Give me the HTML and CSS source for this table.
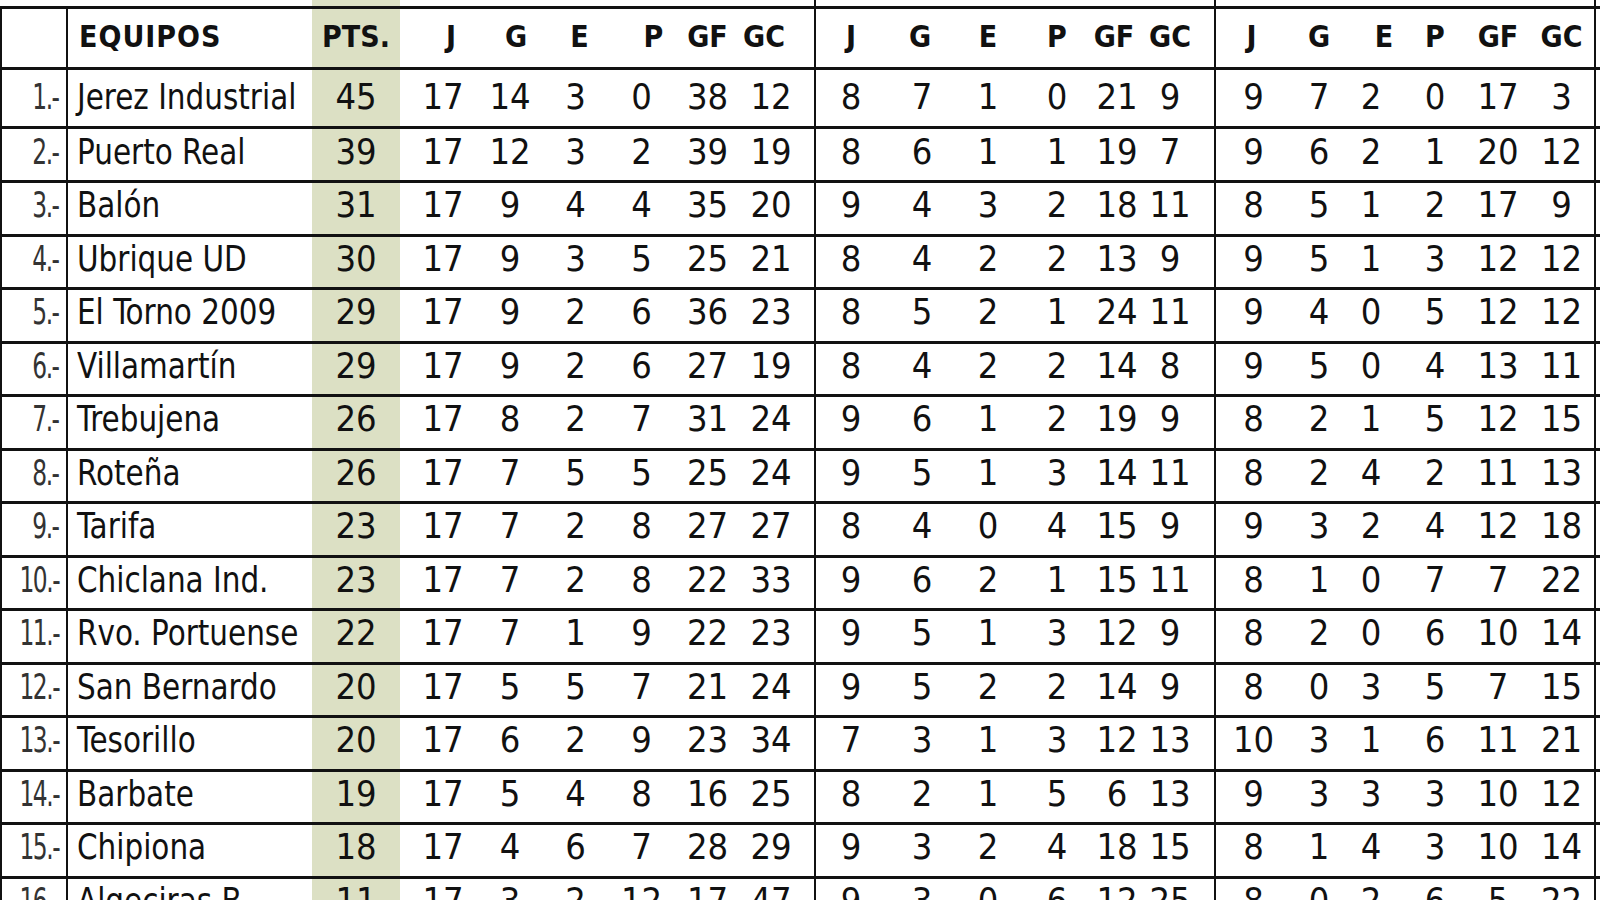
FILE: index.html
```html
<!DOCTYPE html>
<html lang="es">
<head>
<meta charset="utf-8">
<title>Clasificación</title>
<link rel="stylesheet" href="styles.css">
</head>
<body>
<div class="sheet">
  <div class="row top"><div></div><div></div><div></div><div></div><div></div><div></div><div></div><div></div><div></div><div></div><div></div><div></div><div></div><div></div><div></div><div></div><div></div><div></div><div></div><div></div><div></div></div>
  <div class="row head"><div></div><div class="team"><span>EQUIPOS</span></div><div>PTS.</div><div>J</div><div>G</div><div>E</div><div>P</div><div>GF</div><div>GC</div><div>J</div><div>G</div><div>E</div><div>P</div><div>GF</div><div>GC</div><div>J</div><div>G</div><div>E</div><div>P</div><div>GF</div><div>GC</div></div>
  <div class="row first"><div><span>1.-</span></div><div class="team"><span>Jerez Industrial</span></div><div>45</div><div>17</div><div>14</div><div>3</div><div>0</div><div>38</div><div>12</div><div>8</div><div>7</div><div>1</div><div>0</div><div>21</div><div>9</div><div>9</div><div>7</div><div>2</div><div>0</div><div>17</div><div>3</div></div>
  <div class="row second"><div><span>2.-</span></div><div class="team"><span>Puerto Real</span></div><div>39</div><div>17</div><div>12</div><div>3</div><div>2</div><div>39</div><div>19</div><div>8</div><div>6</div><div>1</div><div>1</div><div>19</div><div>7</div><div>9</div><div>6</div><div>2</div><div>1</div><div>20</div><div>12</div></div>
  <div class="row"><div><span>3.-</span></div><div class="team"><span>Balón</span></div><div>31</div><div>17</div><div>9</div><div>4</div><div>4</div><div>35</div><div>20</div><div>9</div><div>4</div><div>3</div><div>2</div><div>18</div><div>11</div><div>8</div><div>5</div><div>1</div><div>2</div><div>17</div><div>9</div></div>
  <div class="row"><div><span>4.-</span></div><div class="team"><span>Ubrique UD</span></div><div>30</div><div>17</div><div>9</div><div>3</div><div>5</div><div>25</div><div>21</div><div>8</div><div>4</div><div>2</div><div>2</div><div>13</div><div>9</div><div>9</div><div>5</div><div>1</div><div>3</div><div>12</div><div>12</div></div>
  <div class="row"><div><span>5.-</span></div><div class="team"><span>El Torno 2009</span></div><div>29</div><div>17</div><div>9</div><div>2</div><div>6</div><div>36</div><div>23</div><div>8</div><div>5</div><div>2</div><div>1</div><div>24</div><div>11</div><div>9</div><div>4</div><div>0</div><div>5</div><div>12</div><div>12</div></div>
  <div class="row"><div><span>6.-</span></div><div class="team"><span>Villamartín</span></div><div>29</div><div>17</div><div>9</div><div>2</div><div>6</div><div>27</div><div>19</div><div>8</div><div>4</div><div>2</div><div>2</div><div>14</div><div>8</div><div>9</div><div>5</div><div>0</div><div>4</div><div>13</div><div>11</div></div>
  <div class="row"><div><span>7.-</span></div><div class="team"><span>Trebujena</span></div><div>26</div><div>17</div><div>8</div><div>2</div><div>7</div><div>31</div><div>24</div><div>9</div><div>6</div><div>1</div><div>2</div><div>19</div><div>9</div><div>8</div><div>2</div><div>1</div><div>5</div><div>12</div><div>15</div></div>
  <div class="row"><div><span>8.-</span></div><div class="team"><span>Roteña</span></div><div>26</div><div>17</div><div>7</div><div>5</div><div>5</div><div>25</div><div>24</div><div>9</div><div>5</div><div>1</div><div>3</div><div>14</div><div>11</div><div>8</div><div>2</div><div>4</div><div>2</div><div>11</div><div>13</div></div>
  <div class="row"><div><span>9.-</span></div><div class="team"><span>Tarifa</span></div><div>23</div><div>17</div><div>7</div><div>2</div><div>8</div><div>27</div><div>27</div><div>8</div><div>4</div><div>0</div><div>4</div><div>15</div><div>9</div><div>9</div><div>3</div><div>2</div><div>4</div><div>12</div><div>18</div></div>
  <div class="row"><div><span>10.-</span></div><div class="team"><span>Chiclana Ind.</span></div><div>23</div><div>17</div><div>7</div><div>2</div><div>8</div><div>22</div><div>33</div><div>9</div><div>6</div><div>2</div><div>1</div><div>15</div><div>11</div><div>8</div><div>1</div><div>0</div><div>7</div><div>7</div><div>22</div></div>
  <div class="row"><div><span>11.-</span></div><div class="team"><span>Rvo. Portuense</span></div><div>22</div><div>17</div><div>7</div><div>1</div><div>9</div><div>22</div><div>23</div><div>9</div><div>5</div><div>1</div><div>3</div><div>12</div><div>9</div><div>8</div><div>2</div><div>0</div><div>6</div><div>10</div><div>14</div></div>
  <div class="row"><div><span>12.-</span></div><div class="team"><span>San Bernardo</span></div><div>20</div><div>17</div><div>5</div><div>5</div><div>7</div><div>21</div><div>24</div><div>9</div><div>5</div><div>2</div><div>2</div><div>14</div><div>9</div><div>8</div><div>0</div><div>3</div><div>5</div><div>7</div><div>15</div></div>
  <div class="row"><div><span>13.-</span></div><div class="team"><span>Tesorillo</span></div><div>20</div><div>17</div><div>6</div><div>2</div><div>9</div><div>23</div><div>34</div><div>7</div><div>3</div><div>1</div><div>3</div><div>12</div><div>13</div><div>10</div><div>3</div><div>1</div><div>6</div><div>11</div><div>21</div></div>
  <div class="row"><div><span>14.-</span></div><div class="team"><span>Barbate</span></div><div>19</div><div>17</div><div>5</div><div>4</div><div>8</div><div>16</div><div>25</div><div>8</div><div>2</div><div>1</div><div>5</div><div>6</div><div>13</div><div>9</div><div>3</div><div>3</div><div>3</div><div>10</div><div>12</div></div>
  <div class="row"><div><span>15.-</span></div><div class="team"><span>Chipiona</span></div><div>18</div><div>17</div><div>4</div><div>6</div><div>7</div><div>28</div><div>29</div><div>9</div><div>3</div><div>2</div><div>4</div><div>18</div><div>15</div><div>8</div><div>1</div><div>4</div><div>3</div><div>10</div><div>14</div></div>
  <div class="row"><div><span>16.-</span></div><div class="team"><span>Algeciras B.</span></div><div>11</div><div>17</div><div>3</div><div>2</div><div>12</div><div>17</div><div>47</div><div>9</div><div>3</div><div>0</div><div>6</div><div>12</div><div>25</div><div>8</div><div>0</div><div>2</div><div>6</div><div>5</div><div>22</div></div>
</div>
</body>
</html>
```
FILE: styles.css
```css
html, body {
  margin: 0;
  padding: 0;
  background: #ffffff;
  overflow: hidden;
}

.sheet {
  width: 1600px;
  height: 900px;
  overflow: hidden;
  font-family: "DejaVu Sans Condensed", "DejaVu Sans", sans-serif;
  font-stretch: condensed;
  color: #111111;
  line-height: 1;
}

.row {
  display: grid;
  grid-template-columns:
    68px 244px 88px
    77px 66px 65px 67px 65px 76px
    70px 68px 68px 64px 56px 74px
    71px 58px 58px 64px 62px 67px;
  height: 53.5px;
  box-sizing: border-box;
  border-bottom: 3px solid #111;
  font-size: 36px;
}

.row > div {
  display: flex;
  align-items: center;
  justify-content: center;
  box-sizing: border-box;
  padding-bottom: 6px;
  white-space: nowrap;
  min-width: 0;
}

.row.top { height: 9px; }
.row.head { height: 61px; font-size: 30px; font-weight: bold; }
.row.first { height: 59px; }
.row.second { height: 54px; }
.row.head > div { padding-bottom: 2px; }
.row.first > div { padding-bottom: 2px; }
.row.top > div { padding-bottom: 0; }

/* rank column */
.row > div:nth-child(1) {
  justify-content: flex-end;
  padding-right: 7px;
  border-left: 2px solid #111;
  border-right: 2px solid #111;
  color: #333333;
}
.row > div:nth-child(1) span {
  display: inline-block;
  letter-spacing: -2px;
  transform: scaleX(0.72);
  transform-origin: right center;
}
.row.top > div:nth-child(1) { border-left: 0; border-right: 0; }

/* team column */
.row > .team {
  justify-content: flex-start;
  padding-left: 9px;
}
.team span {
  display: inline-block;
  transform: scaleX(0.91);
  transform-origin: left center;
}
.row.head > .team { padding-left: 11px; }
.row.head .team span { transform: none; letter-spacing: 1px; }

/* points column */
.row > div:nth-child(3) { background: #dce0c4; }

/* group 1 */
.row > div:nth-child(4) { padding-left: 9px; }
.row > div:nth-child(9) { padding-right: 12px; border-right: 2px solid #111; }

/* group 2 */
.row > div:nth-child(11) { padding-left: 4px; }
.row > div:nth-child(13) { padding-left: 6px; }
.row > div:nth-child(14) { padding-left: 6px; }
.row > div:nth-child(15) { padding-right: 16px; border-right: 2px solid #111; }

/* group 3 */
.row > div:nth-child(16) { padding-left: 4px; }
.row > div:nth-child(17) { padding-left: 6px; }
.row > div:nth-child(18) { padding-right: 6px; }
.row > div:nth-child(21) { border-right: 2px solid #111; }

/* header label offsets */
.row.head > div:nth-child(4) { padding-left: 25px; }
.row.head > div:nth-child(5) { padding-left: 12px; }
.row.head > div:nth-child(6) { padding-left: 8px; }
.row.head > div:nth-child(7) { padding-left: 24px; }
.row.head > div:nth-child(9) { padding-right: 26px; }
.row.head > div:nth-child(11) { padding-left: 0; }
.row.head > div:nth-child(14) { padding-left: 0; }
.row.head > div:nth-child(16) { padding-left: 0; }
.row.head > div:nth-child(17) { padding-left: 6px; }
.row.head > div:nth-child(18) { padding-left: 20px; padding-right: 0; }
```
